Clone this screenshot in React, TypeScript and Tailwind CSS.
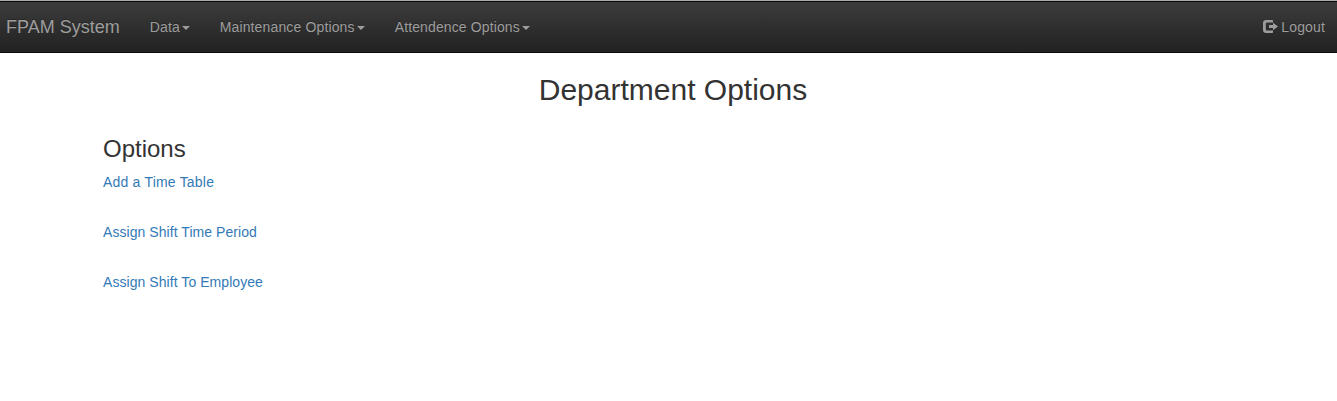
import React from "react";

function Menu({ label, className }: { label: string; className: string }) {
  return (
    <a href="#" className={className}>
      {label}
      <span className="ml-[2px] inline-block border-x-4 border-t-4 border-x-transparent border-t-[#9d9d9d] align-middle" />
    </a>
  );
}

export default function App() {
  return (
    <div className="min-h-[401px] bg-white font-['Liberation_Sans',Arial,sans-serif] text-[14px] leading-5 text-[#333333]">
      <div className="h-px bg-[#a9ada9]" />
      <nav className="flex h-[52px] justify-between border-y border-[#080808] bg-linear-to-b from-[#3c3c3c] to-[#222222] text-[#9d9d9d] [text-shadow:0_-1px_0_rgba(0,0,0,0.25)]">
        <div className="flex">
          <a href="#" className="block py-[15px] pr-[15px] pl-[6px] text-[18px]">FPAM System</a>
          <Menu label="Data" className="block w-[70px] py-[15px] pl-[15px] tracking-[0.15px]" />
          <Menu label="Maintenance Options" className="block w-[175px] py-[15px] pl-[15px] tracking-[0.14px]" />
          <Menu label="Attendence Options" className="block py-[15px] pl-[15px] tracking-[0.12px]" />
        </div>
        <a href="#" className="flex gap-[3px] py-[15px] pr-[12px] tracking-[0.15px]">
          <svg viewBox="0 0 15 13" className="mt-[3px] h-[13px] w-[15px]" fill="currentColor">
            <path d="M9.300 0H3.200Q0 0 0 3.200v6.600Q0 13 3.200 13h6.100q.7 0 .7-.7V10.500H4Q2.800 10.500 2.800 9.300V3.700Q2.800 2.500 4 2.500h6V.7Q10 0 9.300 0z" />
            <path d="M10 2.800 15 6.500l-5 3.700V8H6V5h4z" />
          </svg>
          Logout
        </a>
      </nav>
      <main className="px-[103px]">
        <h1 className="pt-5 pl-[9px] text-center text-[30px] leading-[33px]">Department Options</h1>
        <h2 className="mt-[30px] text-[24px] leading-[26px]">Options</h2>
        <div className="mt-[10px] flex flex-col items-start gap-[30px] text-[#337ab7]">
          <a href="#" className="tracking-[0.2px]">Add a Time Table</a>
          <a href="#" className="tracking-[0.06px]">Assign Shift Time Period</a>
          <a href="#" className="tracking-[0.06px]">Assign Shift To Employee</a>
        </div>
      </main>
    </div>
  );
}
